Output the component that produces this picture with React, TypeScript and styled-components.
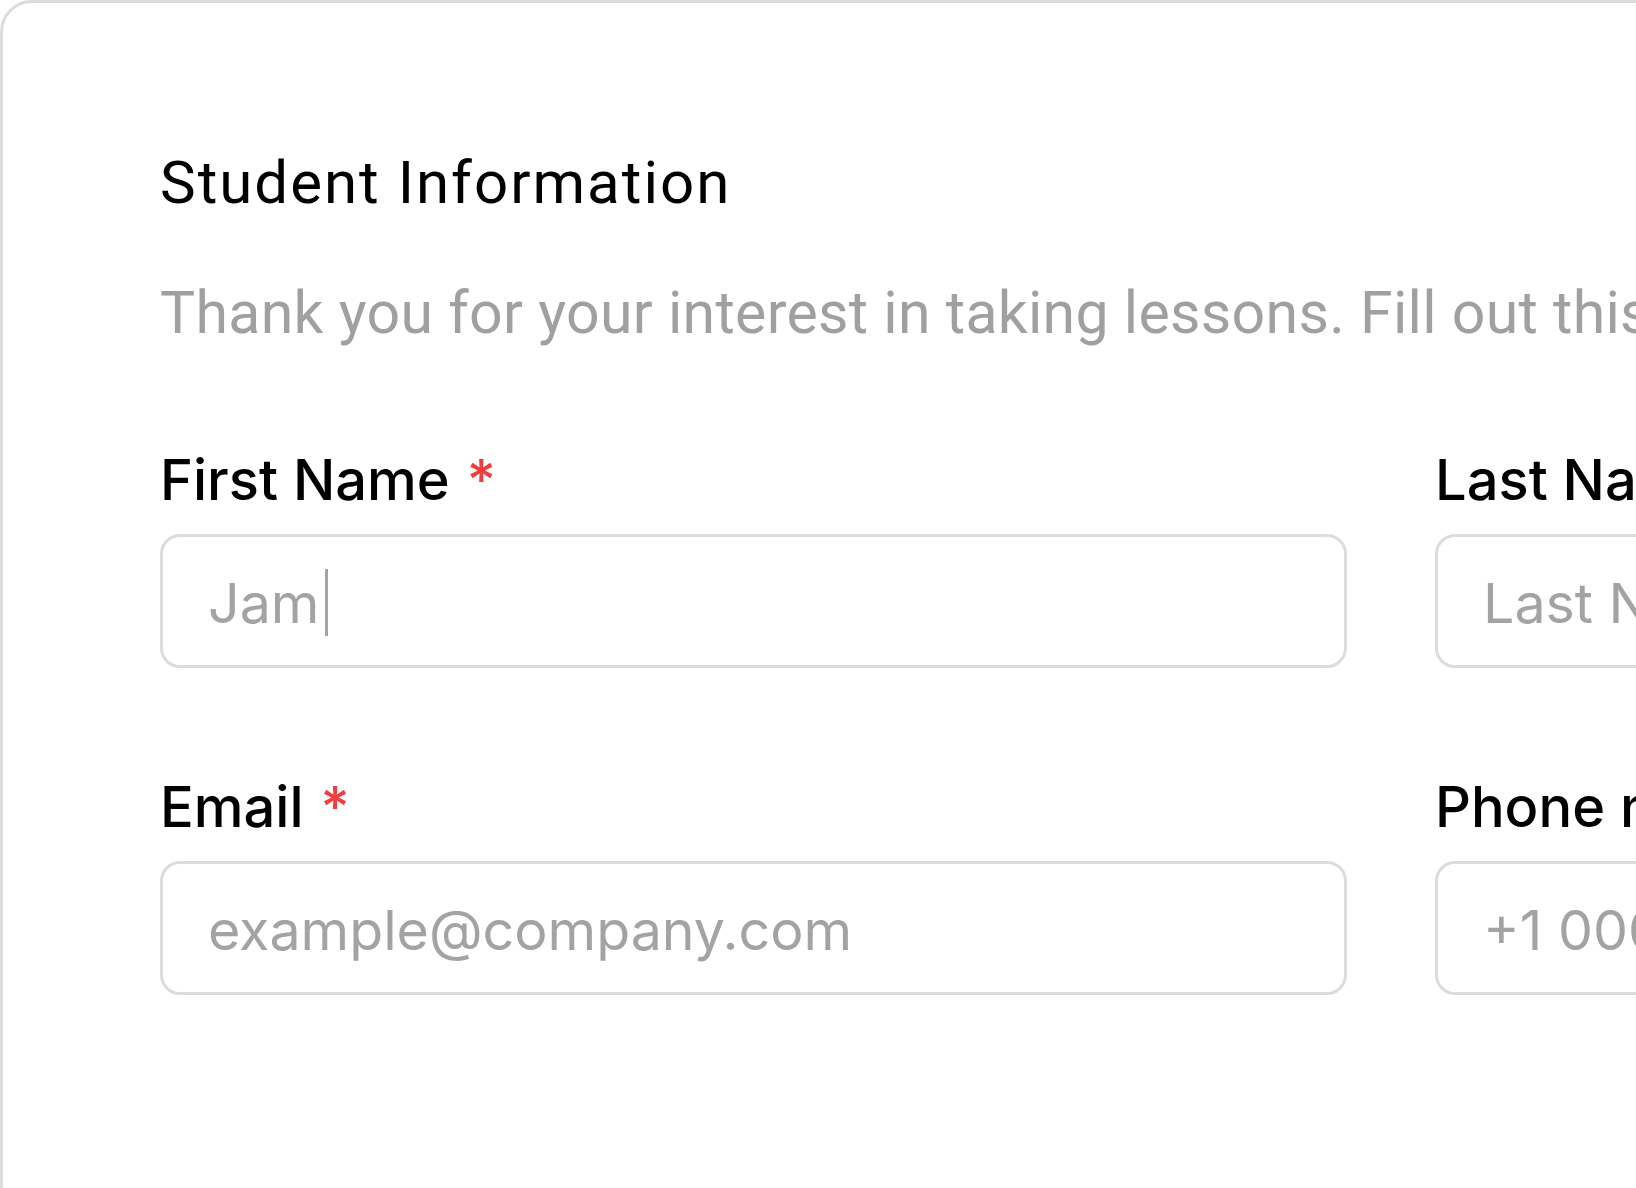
import React from 'react'
import styled, { createGlobalStyle } from 'styled-components'

const GlobalStyle = createGlobalStyle`
  html, body {
    margin: 0;
    padding: 0;
    background: #fff;
    overflow: hidden;
  }
  body {
    font-family: Inter, "Noto Sans", "Liberation Sans", sans-serif;
    -webkit-font-smoothing: antialiased;
  }
`

const Page = styled.div`
  width: 1636px;
  height: 1188px;
  overflow: hidden;
  background: #fff;
`

const Card = styled.section`
  box-sizing: border-box;
  width: 2800px;
  min-height: 1300px;
  border: 3px solid #dcdcdc;
  border-radius: 32px;
  padding: 150px 0 0 157px;
  background: #fff;
`

const Title = styled.h1`
  margin: 0;
  font-family: Roboto, "Liberation Sans", sans-serif;
  font-size: 60px;
  line-height: 60px;
  font-weight: 400;
  letter-spacing: 2px;
  color: #000;
`

const Intro = styled.p`
  margin: 71px 0 0;
  font-family: Roboto, "Liberation Sans", sans-serif;
  font-size: 59px;
  line-height: 58px;
  font-weight: 400;
  letter-spacing: 0.3px;
  color: #a0a0a0;
  white-space: nowrap;
`

const FieldGrid = styled.div`
  margin-top: 111px;
  display: grid;
  grid-template-columns: 1187px 1187px;
  column-gap: 88px;
  row-gap: 112px;
`

const Field = styled.div`
  display: flex;
  flex-direction: column;
  gap: 26px;
`

const Label = styled.label`
  font-size: 56px;
  line-height: 55px;
  font-weight: 500;
  color: #000;
  white-space: nowrap;
`

const Required = styled.span`
  color: #f03e3e;
  margin-left: 17px;
`

const InputBox = styled.div`
  box-sizing: border-box;
  height: 134px;
  border: 3px solid #dcdcdc;
  border-radius: 20px;
  padding: 2px 0 0 45px;
  display: flex;
  align-items: center;
  font-size: 55.5px;
  color: #a3a3a3;
  white-space: nowrap;
  overflow: hidden;
`

const Caret = styled.span`
  display: inline-block;
  width: 3px;
  height: 67px;
  margin-left: 6px;
  background: #a3a3a3;
`

type FieldProps = {
  label: string
  required?: boolean
  text: string
  typing?: boolean
}

const FormField = ({ label, required, text, typing }: FieldProps) => (
  <Field>
    <Label>
      {label}
      {required && <Required>*</Required>}
    </Label>
    <InputBox>
      {text}
      {typing && <Caret />}
    </InputBox>
  </Field>
)

const App = () => {
  return (
    <Page>
      <GlobalStyle />
      <Card>
        <Title>Student Information</Title>
        <Intro>
          Thank you for your interest in taking lessons. Fill out this form and we will get back to you shortly.
        </Intro>
        <FieldGrid>
          <FormField label="First Name" required text="Jam" typing />
          <FormField label="Last Name" required text="Last Name" />
          <FormField label="Email" required text="example@company.com" />
          <FormField label="Phone number" text="+1 000 000 0000" />
        </FieldGrid>
      </Card>
    </Page>
  )
}

export default App
